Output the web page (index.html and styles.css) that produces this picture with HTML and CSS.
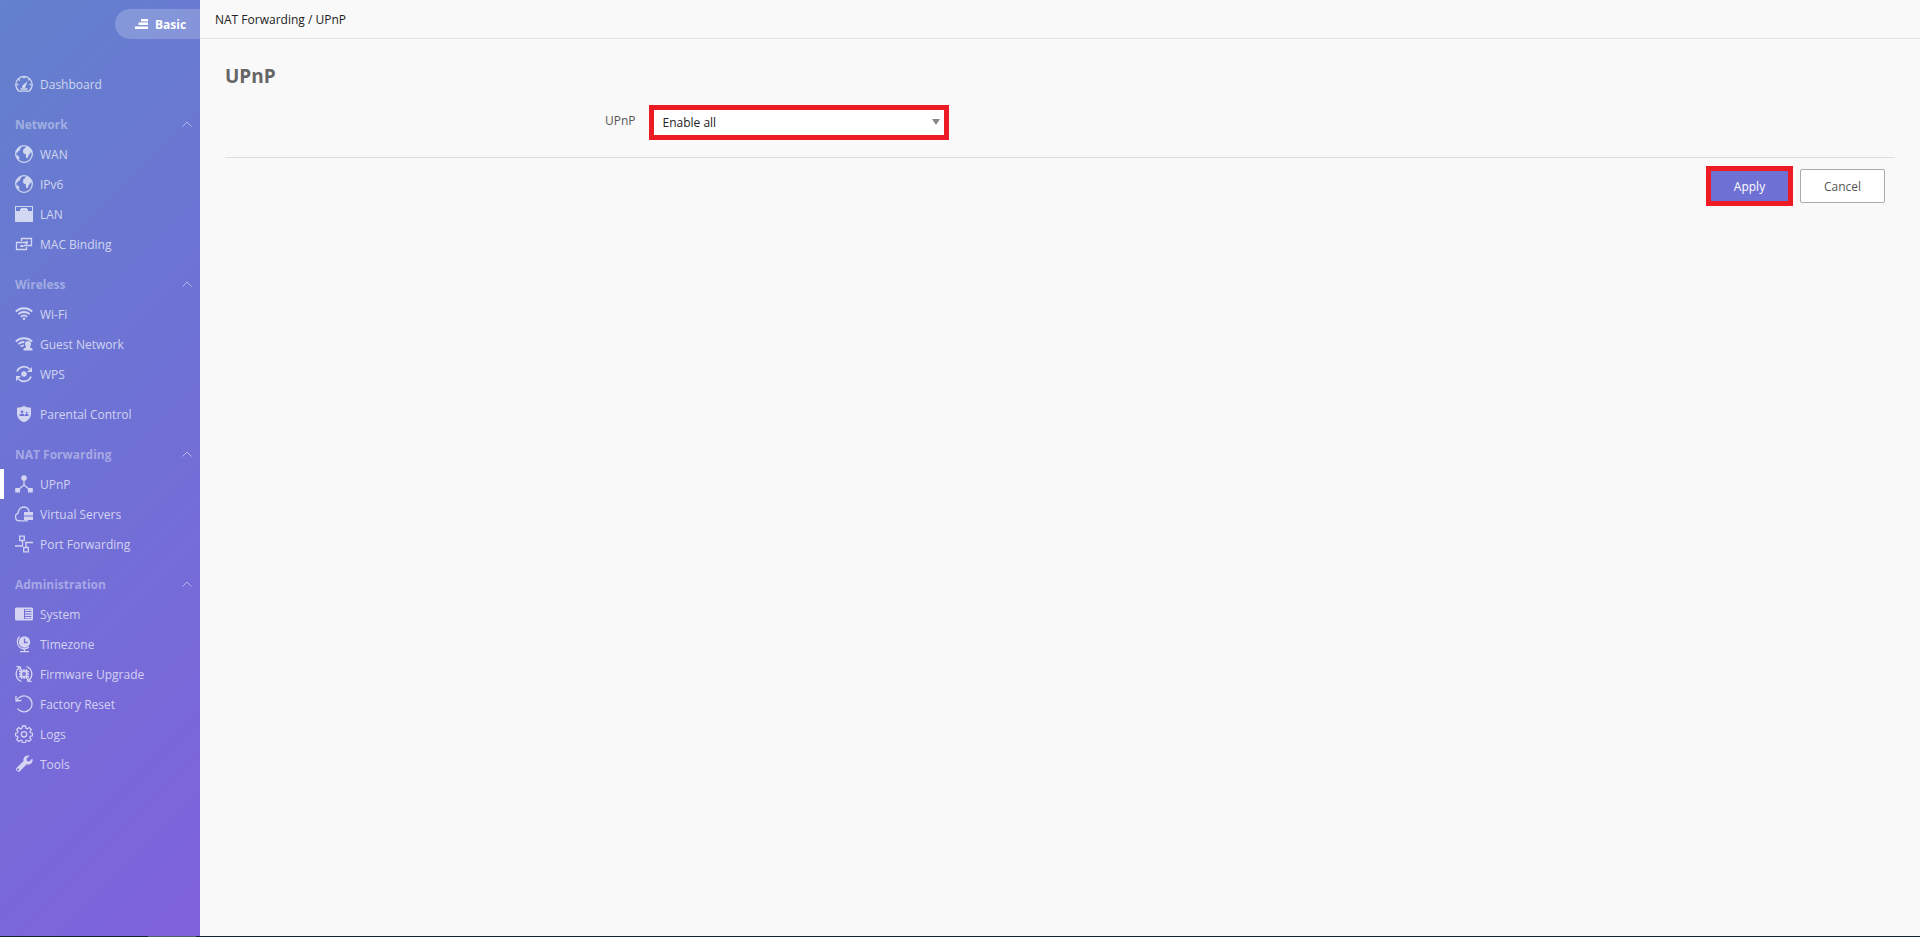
FILE: index.html
```
<!DOCTYPE html>
<html lang="en">
<head>
  <meta charset="UTF-8" />
  <meta name="viewport" content="width=device-width, initial-scale=1" />
  <title>UPnP</title>
  <link rel="stylesheet" href="styles.css">
</head>
<body>
  <div class="app">
    <aside class="sidebar">
      <button class="mode-btn" type="button">
        <svg class="mode-icon" viewBox="0 0 13 10"><path d="M6 0h7v2.500H6zM3.500 3.500H13V6H3.500zM0 7.500h13V10H0z"/></svg>
        Basic
      </button>

      <nav class="menu">
        <a class="item" href="#dashboard">
          <svg class="icon line" viewBox="0 0 18 18"><path d="M4 16.200A8.200 8.200 0 1 1 14 16.200z"/><path d="M5.500 14h7M9 1.500v2M1.500 9.500h2M14.500 9.500h2M3.800 4.300l1.200 1.200M14.200 4.300L13.200 5.300"/><path class="fill" d="M12.500 6l-2 5.500a1.700 1.700 0 1 1-2.400-1.400z"/></svg>
          Dashboard
        </a>

        <!-- Network -->
        <button class="group" type="button">Network <svg class="arrow" viewBox="0 0 10 6"><path d="M.5 5.500L5 1l4.500 4.500"/></svg></button>
        <a class="item" href="#wan">
          <svg class="icon line" viewBox="0 0 18 18"><circle cx="9" cy="9" r="8.300"/><path class="fill" d="M11 1.500L9.800 3.300 8.200 4.500 8 7.200l1 1.500 1.700.3.300 3.200 1 1.300 1.300-1.500.200-1.500 2.300-3 1.500-.8A8 8 0 0 0 11 1.500zM1 7.500h1.800L3.500 5.800 5 5.200 5.300 3.500 7.500 1A8.300 8.300 0 0 0 1 7.500zM1.300 10l2 .8 1.200 2-.5 2A8 8 0 0 1 1.300 10z"/></svg>
          WAN
        </a>
        <a class="item" href="#ipv6">
          <svg class="icon line" viewBox="0 0 18 18"><circle cx="9" cy="9" r="8.300"/><path class="fill" d="M11 1.500L9.800 3.300 8.200 4.500 8 7.200l1 1.500 1.700.3.300 3.200 1 1.300 1.300-1.500.200-1.500 2.300-3 1.500-.8A8 8 0 0 0 11 1.500zM1 7.500h1.800L3.500 5.800 5 5.200 5.300 3.500 7.500 1A8.300 8.300 0 0 0 1 7.500zM1.300 10l2 .8 1.200 2-.5 2A8 8 0 0 1 1.300 10z"/></svg>
          IPv6
        </a>
        <a class="item" href="#lan">
          <svg class="icon solid" viewBox="0 0 18 18"><path fill-rule="evenodd" d="M0 1h18v16H0zM1 2v4h4V4h1V3h6v1h1v2h4V2z"/></svg>
          LAN
        </a>
        <a class="item" href="#mac-binding">
          <svg class="icon line" viewBox="0 0 18 18"><path d="M6.500 6V3.500h10v7H9M11.500 7.500h-10v7h10V12M13 7h-2.500M5 11h3"/><path class="fill" d="M6 10h2.500v2H6zM10.500 7.500h2v2h-2z"/></svg>
          MAC Binding
        </a>

        <!-- Wireless -->
        <button class="group" type="button">Wireless <svg class="arrow" viewBox="0 0 10 6"><path d="M.5 5.500L5 1l4.500 4.500"/></svg></button>
        <a class="item" href="#wifi">
          <svg class="icon wave" viewBox="0 0 18 18"><path d="M.8 6.500a12 12 0 0 1 16.400 0M3.300 9.200a8.500 8.500 0 0 1 11.400 0M5.800 11.700a5 5 0 0 1 6.400 0"/><circle class="fill" cx="9" cy="13.700" r="1.300"/></svg>
          Wi-Fi
        </a>
        <a class="item" href="#guest">
          <svg class="icon wave" viewBox="0 0 18 18"><path d="M.8 6.500a12 12 0 0 1 16.400 0M3.300 9.200a8.500 8.500 0 0 1 6-2.200M5.800 11.700a5 5 0 0 1 3-1.400"/><path class="fill" d="M13 6a3 3 0 0 1 3 3c0 1.300-.5 2-1 2.600v.7l2.500 1.400v1.800H8.500v-1.800l2.500-1.400v-.7c-.6-.6-1-1.300-1-2.600a3 3 0 0 1 3-3z"/></svg>
          Guest Network
        </a>
        <a class="item" href="#wps">
          <svg class="icon wave" viewBox="0 0 18 18"><path d="M2 6.500A7.500 7.500 0 0 1 14.500 4M16 11.500A7.500 7.500 0 0 1 3.500 14"/><path class="fill" d="M17 2v5h-5zM1 16v-5h5z"/><circle class="fill" cx="9" cy="9" r="2.700"/></svg>
          WPS
        </a>

        <a class="item item-single" href="#parental">
          <svg class="icon solid" viewBox="0 0 18 18"><path d="M9 .7c2 1.500 4.500 1.800 7 2v6c0 4-3 7-7 8.600-4-1.600-7-4.600-7-8.600v-6c2.500-.2 5-.5 7-2z"/><g class="cutout"><circle cx="7" cy="6.800" r="1.400"/><path d="M4.500 11V9.500L6 8.700h2l1.500.8V11zM10 11V9.800l1-.8h1.500l1 .8V11z"/><circle cx="11.700" cy="7.800" r="1"/></g></svg>
          Parental Control
        </a>

        <!-- NAT Forwarding -->
        <button class="group" type="button">NAT Forwarding <svg class="arrow" viewBox="0 0 10 6"><path d="M.5 5.500L5 1l4.500 4.500"/></svg></button>
        <a class="item active" href="#upnp">
          <svg class="icon line" viewBox="0 0 18 18"><path d="M9 4v6M9 10l-6 5M9 10l6 5"/><circle class="fill" cx="9" cy="3" r="2.800"/><path class="fill" d="M.2 13H5v4.500H.2zM13 13h4.800v4.500H13z"/></svg>
          UPnP
        </a>
        <a class="item" href="#virtual-servers">
          <svg class="icon line" viewBox="0 0 18 18"><path d="M13 15.800H4.500A3.900 3.900 0 0 1 3.200 8.200C3.200 4.800 5.500 2 8.700 2c3 0 5 2 5.500 5"/><path class="fill" d="M9 7h9v3.500H9zM9 11.500h9V15H9z"/></svg>
          Virtual Servers
        </a>
        <a class="item" href="#port-forwarding">
          <svg class="icon line" viewBox="0 0 18 18"><path d="M4.700 1.200h4.600v4.300H4.700zM8.700 12.500h4.600v4.300H8.700zM0 11h8M10 7.500h8M7.500 6v5M11 7.500v5"/></svg>
          Port Forwarding
        </a>

        <!-- Administration -->
        <button class="group" type="button">Administration <svg class="arrow" viewBox="0 0 10 6"><path d="M.5 5.500L5 1l4.500 4.500"/></svg></button>
        <a class="item" href="#system">
          <svg class="icon solid" viewBox="0 0 18 18"><path fill-rule="evenodd" d="M1 2.500h16l1 1v11l-1 1H1l-1-1v-11zM9 4v10h7.500V4z"/><path d="M10 4.500h7V6h-7zM10 7h7v1.500h-7zM10 9.500h7V11h-7zM10 12h7v1.500h-7z"/></svg>
          System
        </a>
        <a class="item" href="#timezone">
          <svg class="icon line" viewBox="0 0 18 18"><circle class="fill" cx="9.500" cy="7" r="5.700"/><path d="M4.500 1.500C1 5 2 12 7 13.500c3 .8 5.500 0 7-1.500M9.500 14v2.500M5 16.700h9"/><path class="cut-line" d="M9.500 3.500V7.500h3"/></svg>
          Timezone
        </a>
        <a class="item" href="#firmware">
          <svg class="icon line" viewBox="0 0 18 18"><path d="M6.500 16.500A8 8 0 0 1 4.500 2.500M11.500 1.500a8 8 0 0 1 2 14M1.500 1.500l4 .500-.5 3.500M16.500 16.500l-4-.5.500-3.500"/><path class="fill" d="M5.500 5.500h7v7h-7z"/><path d="M6.500 4v10M9 4v10M11.500 4v10M4 6.500h10M4 9h10M4 11.500h10"/><path class="cut-line" d="M8 8h2v2H8z"/></svg>
          Firmware Upgrade
        </a>
        <a class="item" href="#factory-reset">
          <svg class="icon line" viewBox="0 0 18 18"><path d="M1.800 5.500A8 8 0 1 1 2.500 13.500M1 1v5l5.500-.5"/></svg>
          Factory Reset
        </a>
        <a class="item" href="#logs">
          <svg class="icon line" viewBox="0 0 18 18"><path d="M7.500 1h3l.5 2.300 1.300.5 2-1.300 2 2L15 6.600l.5 1.200 2 .4v2.600l-2.200.5-.5 1.200 1.300 2-2 2-2-1.300-1.200.5-.5 2h-3l-.5-2-1.200-.5-2 1.300-2-2 1.300-2-.5-1.200-2-.5V8.200l2-.4.5-1.200-1.300-2 2-2 2 1.300 1.200-.5z"/><circle cx="9" cy="9.300" r="2.700"/></svg>
          Logs
        </a>
        <a class="item" href="#tools">
          <svg class="icon solid" viewBox="0 0 18 18"><path fill-rule="evenodd" d="M14.500.8l-3 3 .5 2.200 2.300.5 3-3c1 2.700-.3 5-2.300 5.700-1.200.4-2.300.3-3.300 0L5 16.300A2.500 2.500 0 0 1 1.400 13l7.200-7C7.500 3.200 10.500-.200 14.500.8zM3 13.500a1 1 0 1 0 .1 0z"/></svg>
          Tools
        </a>
      </nav>
    </aside>

    <main class="main">
      <header class="breadcrumb">NAT Forwarding / UPnP</header>
      <form class="content">
        <h1>UPnP</h1>
        <div class="field">
          <label for="upnp">UPnP</label>
          <div class="select-wrap">
            <select id="upnp">
              <option>Enable all</option>
              <option>Disable</option>
            </select>
          </div>
        </div>
        <div class="actions">
          <button class="btn btn-apply" type="button">Apply</button>
          <button class="btn btn-cancel" type="button">Cancel</button>
        </div>
      </form>
    </main>
  </div>
  <footer class="bottom-line"></footer>
</body>
</html>
```
FILE: styles.css
```
* { box-sizing: border-box; }
body {
  margin: 0;
  min-height: 100vh;
  display: flex;
  flex-direction: column;
  font-family: "Open Sans", "Noto Sans", sans-serif;
  font-size: 12px;
  color: #222;
  background: #fff;
}
button, select { font-family: inherit; font-size: inherit; }
.app { flex: 1; display: flex; background: #f9f9f9; }

/* Sidebar */
.sidebar {
  width: 200px;
  flex-shrink: 0;
  padding-top: 9px;
  display: flex;
  flex-direction: column;
  background: linear-gradient(135deg, #6381cd, #6e72d5 45%, #8062dc);
}
.mode-btn {
  align-self: flex-end;
  display: flex;
  align-items: center;
  gap: 7px;
  width: 85px;
  height: 30px;
  padding: 0 0 0 20px;
  border: 0;
  border-radius: 15px 0 0 15px;
  background: rgba(255,255,255,0.2);
  color: #fff;
  font-weight: bold;
  cursor: pointer;
}
.mode-icon { width: 13px; height: 10px; fill: #fff; }
.menu { margin-top: 30px; }
.item, .group {
  display: flex;
  align-items: center;
  width: 100%;
  height: 30px;
  padding: 0 8px 0 15px;
}
.item { gap: 7px; color: rgba(255,255,255,0.7); text-decoration: none; }
.item-single { margin-top: 10px; }
.active { padding-left: 11px; border-left: 4px solid #fff; }
.group {
  justify-content: space-between;
  margin-top: 10px;
  border: 0;
  background: none;
  color: rgba(255,255,255,0.4);
  font-weight: bold;
  cursor: pointer;
}
.arrow { width: 10px; height: 6px; fill: none; stroke: rgba(255,255,255,0.5); }

/* Icons */
.icon { width: 18px; height: 18px; flex-shrink: 0; opacity: 0.7; }
.line { fill: none; stroke: #fff; stroke-width: 1.3; }
.wave { fill: none; stroke: #fff; stroke-width: 1.8; }
.solid { fill: #fff; }
.icon .fill { fill: #fff; stroke: none; }
.icon .cutout { fill: #6f71d6; }
.icon .cut-line { stroke: #7470d8; }

/* Page */
.main { flex: 1; min-width: 0; }
.breadcrumb {
  height: 39px;
  padding-left: 15px;
  line-height: 39px;
  border-bottom: 1px solid #e3e3e3;
}
.content { padding: 22px 25px; }
h1 { margin: 0; font-size: 19px; line-height: 30px; color: #666; }
.field {
  display: flex;
  align-items: flex-start;
  padding: 14px 0 17px;
  border-bottom: 1px solid #ddd;
}
.field label {
  width: 25%;
  padding-right: 7px;
  margin-right: 6px;
  line-height: 32px;
  text-align: right;
  color: #555;
}
.select-wrap { position: relative; width: 300px; }
.select-wrap::after {
  content: "";
  position: absolute;
  right: 9px;
  top: 14px;
  border: 4px solid transparent;
  border-top: 6px solid #888;
  border-bottom: 0;
  pointer-events: none;
}
.field select {
  appearance: none;
  display: block;
  width: 100%;
  height: 35px;
  padding: 0 9px;
  border: 5px solid #ed1c24;
  border-radius: 0;
  background: #fff;
  color: #222;
}
.actions {
  display: flex;
  justify-content: flex-end;
  align-items: center;
  gap: 7px;
  padding: 8px 10px;
}
.btn { width: 85px; height: 34px; padding: 0; cursor: pointer; }
.btn-apply {
  width: 87px;
  height: 40px;
  border: 5px solid #ed1c24;
  background: #6f70d3;
  color: #fff;
}
.btn-cancel { border: 1px solid #aaa; border-radius: 2px; background: #fff; color: #555; }

/* Line at the foot of the window */
.bottom-line {
  height: 2px;
  border-bottom: 1px solid #fff;
  background: linear-gradient(90deg, #0c2333 148px, #4b6068 148px, #4b6068 196px, #0c2333 196px);
}
```
